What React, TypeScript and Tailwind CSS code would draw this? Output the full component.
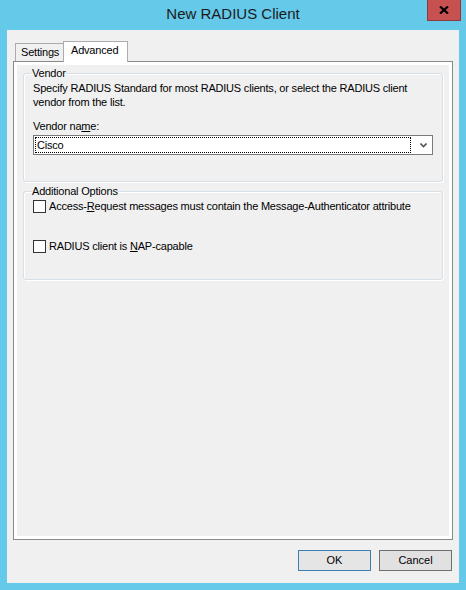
import React from "react";

const font = "font-['Liberation_Sans',Arial,sans-serif]";

function Check({ children }: { children: React.ReactNode }) {
  return (
    <label className="flex items-center h-[14px]">
      <span className="w-[13px] h-[13px] border border-[#333333] bg-white shrink-0" />
      <span className="ml-[3px] text-[11px] leading-[14px] tracking-[-0.2px] text-black">{children}</span>
    </label>
  );
}

function GroupBox({
  title,
  className,
  children,
}: {
  title: string;
  className?: string;
  children: React.ReactNode;
}) {
  return (
    <fieldset
      className={`border border-[#d5dfe5] rounded-[3px] shadow-[inset_1px_1px_0_white,1px_1px_0_white] px-[9px] ${className ?? ""}`}
    >
      <legend className="ml-[-1px] px-0 text-[11px] leading-[14px] tracking-[-0.2px] text-black">{title}</legend>
      {children}
    </fieldset>
  );
}

export default function App() {
  return (
    <div className={`w-[466px] h-[590px] bg-[#65c9ea] flex flex-col ${font}`}>
      {/* title bar */}
      <div className="relative h-[30px] flex items-center justify-center">
        <span className="text-[15px] text-[#1b1b1b] mt-[-1px]">New RADIUS Client</span>
        <button className="absolute right-[5px] top-0 w-[34px] h-[21px] bg-[#c75050] border border-[#8d3a3a] border-t-0 flex items-center justify-center">
          <svg width="10" height="8" viewBox="0 0 10 8">
            <path d="M1 0.5 L9 7.5 M9 0.5 L1 7.5" stroke="#000" strokeWidth="2.2" />
          </svg>
        </button>
      </div>

      {/* client area */}
      <div className="flex-1 mx-[7px] mb-[7px] bg-[#f0f0f0] flex flex-col px-[6px] pt-[11px] pb-[12px]">
        <div className="flex items-end h-[20px] pl-[2px]">
          <div className="h-[18px] w-[48px] border-l border-t border-[#acacac] bg-[#f0f0f0] text-[11px] leading-[16px] tracking-[-0.2px] text-black pl-[5px]">
            Settings
          </div>
          <div className="relative z-10 h-[21px] w-[65px] mb-[-1px] border-x border-t border-[#acacac] bg-white text-[11px] leading-[16px] tracking-[-0.2px] text-black pl-[7px]">
            Advanced
          </div>
        </div>

        <div className="flex-1 border border-[#898989] bg-white p-[3px] flex">
          <div className="flex-1 bg-[#f0f0f0] px-[6px] pt-[1px]">
            <GroupBox title="Vendor" className="pb-[26px]">
              <p className="mt-[1px] text-[11px] leading-[14px] tracking-[-0.2px] text-black">
                Specify RADIUS Standard for most RADIUS clients, or select the RADIUS client vendor from the list.
              </p>
              <div className="mt-[10px] text-[11px] leading-[14px] tracking-[-0.2px] text-black">
                Vendor na<span className="underline">m</span>e:
              </div>
              <div className="mt-[2px] h-[20px] border border-[#7a7a7a] bg-white flex items-center pl-[1px] pr-[5px]">
                <div className="flex-1 h-[16px] border border-dotted border-black text-[11px] leading-[14px] tracking-[-0.2px] text-black pl-[1px]">
                  Cisco
                </div>
                <svg className="ml-[9px]" width="7" height="5" viewBox="0 0 7 5">
                  <path d="M0.5 0.5 L3.5 3.5 L6.5 0.5" stroke="#555" strokeWidth="1.6" fill="none" />
                </svg>
              </div>
            </GroupBox>

            <GroupBox title="Additional Options" className="mt-[2px] h-[96px]">
              <div className="mt-[1px] flex flex-col gap-[26px]">
                <Check>
                  Access-<span className="underline">R</span>equest messages must contain the Message-Authenticator attribute
                </Check>
                <Check>
                  RADIUS client is <span className="underline">N</span>AP-capable
                </Check>
              </div>
            </GroupBox>
          </div>
        </div>

        <div className="mt-[10px] flex justify-end gap-[8px] pr-[1px]">
          <button className="w-[73px] h-[21px] border border-[#3c7fb1] bg-[#e5e5e5] text-[11px] text-black">
            OK
          </button>
          <button className="w-[73px] h-[21px] border border-[#707070] bg-[#e1e1e1] text-[11px] text-black">
            Cancel
          </button>
        </div>
      </div>
    </div>
  );
}
